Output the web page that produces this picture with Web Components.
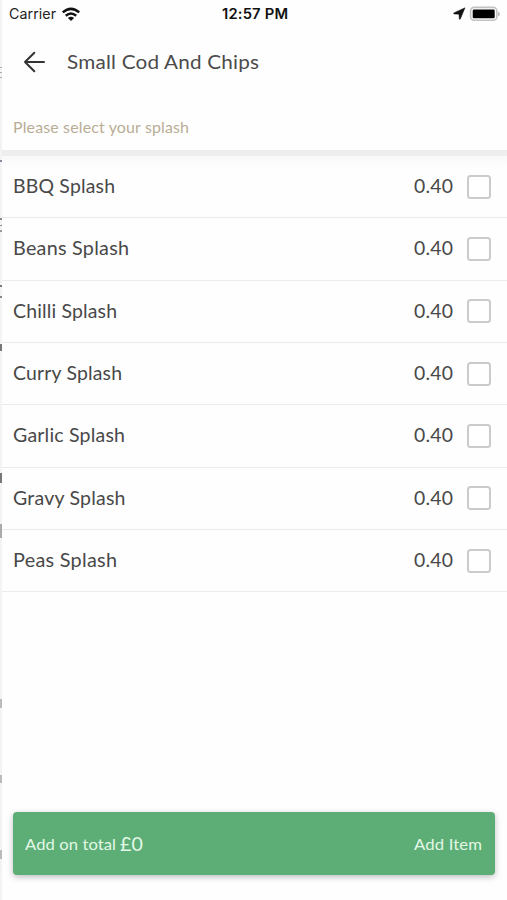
<!DOCTYPE html>
<html lang="en"><head><meta charset="utf-8"><title>Small Cod And Chips</title>
<style>html,body{margin:0;background:#fff}body{width:507px;height:900px;overflow:hidden}</style></head>
<body><splash-screen></splash-screen>
<script>
// Text set to a given width by widening its letters horizontally.
class FitText extends HTMLElement{
  connectedCallback(){
    const r=this.attachShadow({mode:'open'});
    r.innerHTML='<style>:host{display:block;white-space:nowrap;line-height:24px}span{display:inline-block;transform-origin:0 50%}</style><span></span>';
    const s=r.querySelector('span'),t=this.getAttribute('text'),w=+this.getAttribute('width');
    s.textContent=t;
    const n=s.getBoundingClientRect().width,d=(w-n)*.25/(t.length-1);
    s.style.letterSpacing=d+'px';
    const m=n+d*(t.length-1);
    s.style.marginRight=(w-m-d)+'px';
    s.style.transform='scaleX('+w/m+')';
  }
}
class StatusBar extends HTMLElement{
  connectedCallback(){
    this.attachShadow({mode:'open'}).innerHTML=`<style>
:host{display:grid;grid-template-columns:1fr auto 1fr;align-items:center;height:28px;padding:0 6px 0 9px;font:14px Inter,sans-serif;color:#222}
div{display:flex;align-items:center}.l{gap:5px}.r{justify-content:flex-end;gap:3px}
.t{font-weight:600;font-size:14px;color:#111}svg{display:block}</style>
<div class="l"><fit-text text="Carrier" width="47"></fit-text>
<svg width="20" height="15" viewBox="0 0 20 15" fill="none" stroke="#111" stroke-width="2.5"><path d="M1.8 5.4Q10-1.7 18.2 5.4M4.8 8.7Q10 4.3 15.2 8.7"/><path d="M10 14 6.9 10.9Q10 8.4 13.1 10.9Z" fill="#111" stroke="none"/></svg></div>
<fit-text class="t" text="12:57 PM" width="66"></fit-text>
<div class="r"><svg width="13" height="14" viewBox="0 0 13 14"><path d="M12 .8 .8 5.9Q.4 6.8 1.2 6.9L6 7.2 6.3 12Q6.6 12.8 7.3 12Z" fill="#111" stroke="#111" stroke-width=".5"/></svg>
<svg width="32" height="16" viewBox="0 0 32 16"><rect x="1.6" y="1.4" width="26.2" height="12.8" rx="3.5" fill="#fff" stroke="#c2c2c2" stroke-width="1.6"/><rect x="3.7" y="3.5" width="22" height="8.8" rx="1.2" fill="#000"/><path d="M29 5.2Q33 8 29 10.6Z" fill="#bbb"/></svg></div>`;
  }
}
class NavHeader extends HTMLElement{
  connectedCallback(){
    this.attachShadow({mode:'open'}).innerHTML=`<style>
:host{display:block;height:122px;border-bottom:6px solid #eee;font-family:Lato,sans-serif}
.n{display:flex;align-items:center;height:68px;padding-left:23px;gap:21px;color:#4b4b4b;font-size:19.5px}
.s{padding:19px 0 0 13px;color:#b9ad95;font-size:15px}svg{display:block}</style>
<div class="n"><svg width="23" height="22" viewBox="0 0 23 22" fill="none" stroke="#333" stroke-width="2" stroke-linecap="round" stroke-linejoin="round"><path d="M21 11H2M11.3 1.7 2 11l9.3 9.3"/></svg>
<fit-text text="Small Cod And Chips" width="192"></fit-text></div>
<fit-text class="s" text="Please select your splash" width="176"></fit-text>`;
  }
}
class SplashRow extends HTMLElement{
  connectedCallback(){
    this.attachShadow({mode:'open'}).innerHTML=`<style>
:host{display:flex;align-items:center;box-sizing:border-box;height:62.33px;padding:0 16px 0 13px;border-bottom:1px solid #ebebeb;font:18.4px Lato,sans-serif;color:#484848}
fit-text{margin-top:-1px}.p{margin-left:auto}i{box-sizing:border-box;width:24px;height:24px;margin-left:14px;border:2px solid #cbcbcb;border-radius:3.5px;background:#fff}</style>
<fit-text text="${this.getAttribute('name')}" width="${this.getAttribute('fit')}"></fit-text><fit-text class="p" text="0.40" width="39"></fit-text><i></i>`;
  }
}
class AddBar extends HTMLElement{
  connectedCallback(){
    this.attachShadow({mode:'open'}).innerHTML=`<style>
:host{display:flex;align-items:center;box-sizing:border-box;height:63px;padding:0 13px 0 12px;border-radius:4px;background:#5cad76;color:#e3f8e6;font:16px Lato,sans-serif;box-shadow:0 2px 6px rgba(0,0,0,.25)}
.b{font-size:19px;margin-left:4px}.a{margin-left:auto}</style>
<fit-text text="Add on total" width="91"></fit-text><fit-text class="b" text="£0" width="23"></fit-text><fit-text class="a" text="Add Item" width="68"></fit-text>`;
  }
}
// Sliver of the page behind, with the ends of its text lines.
class PageEdge extends HTMLElement{
  connectedCallback(){
    const m=[[67,1,'#aaa'],[72,1,'#aaa'],[77,1,'#aaa'],[160,2,'#889'],[218,2,'#888'],[225,1,'#888'],[230,2,'#999'],[285,2,'#777'],[296,2,'#888'],[344,7,'#777'],[473,10,'#777'],[524,14,'#aaa'],[699,9,'#bbb'],[775,8,'#bbb'],[850,9,'#bbb']];
    let y=0,h='';
    for(const [t,n,c] of m){h+=`<b style="margin-top:${t-y}px;height:${n}px;background:${c}"></b>`;y=t+n}
    this.attachShadow({mode:'open'}).innerHTML=`<style>:host{display:flow-root;width:2px;height:900px;background:#f3f3f3}b{display:block}</style>${h}`;
  }
}
class SplashScreen extends HTMLElement{
  connectedCallback(){
    const rows=[['BBQ Splash',102],['Beans Splash',116],['Chilli Splash',104],['Curry Splash',109],['Garlic Splash',112],['Gravy Splash',112.5],['Peas Splash',104]];
    this.attachShadow({mode:'open'}).innerHTML=`<style>
:host{display:grid;grid-template:900px/2px 505px}
main{display:flex;flex-direction:column;background:#fefefe;margin-left:-2px;clip-path:inset(0 0 0 2px)}
page-edge{z-index:1}
.list{background:linear-gradient(#f9f9f9,#fefefe 12px)}add-bar{margin:auto 12px 25px 13px}</style>
<page-edge></page-edge><main><status-bar></status-bar><nav-header></nav-header><div class="list">${rows.map(r=>`<splash-row name="${r[0]}" fit="${r[1]}"></splash-row>`).join('')}</div><add-bar></add-bar></main>`;
  }
}
customElements.define('fit-text',FitText);
customElements.define('status-bar',StatusBar);
customElements.define('nav-header',NavHeader);
customElements.define('splash-row',SplashRow);
customElements.define('add-bar',AddBar);
customElements.define('page-edge',PageEdge);
customElements.define('splash-screen',SplashScreen);
</script></body></html>
